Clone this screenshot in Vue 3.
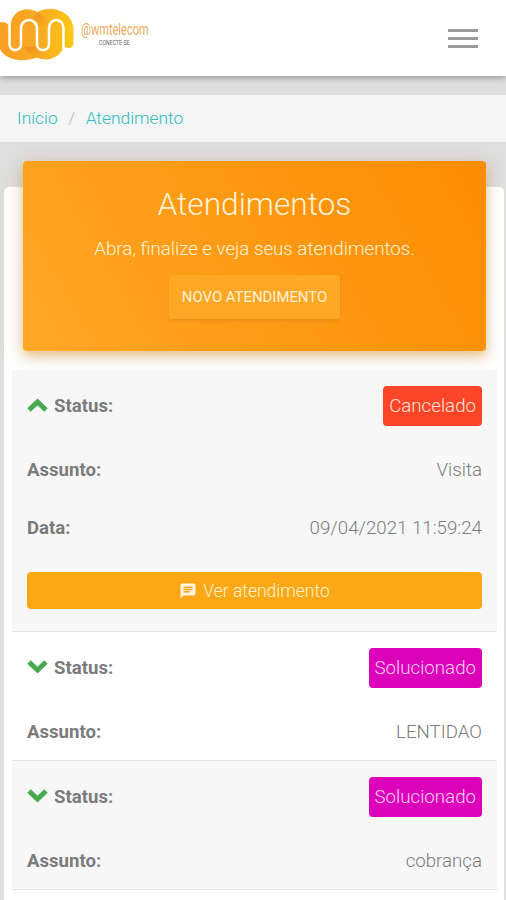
<template>
  <div class="page">
    <!-- Navbar -->
    <header class="navbar">
      <div class="brand">
        <svg class="logo" width="75" height="64" viewBox="0 0 75 64">
          <defs>
            <linearGradient id="ribbon" x1="0" y1="0" x2="1" y2="0">
              <stop offset="0" stop-color="#f99f24" />
              <stop offset="0.55" stop-color="#f9ab22" />
              <stop offset="1" stop-color="#fdc914" />
            </linearGradient>
            <linearGradient id="fold" x1="0" y1="0" x2="1" y2="1">
              <stop offset="0" stop-color="#f08c1e" stop-opacity="0.8" />
              <stop offset="1" stop-color="#f39220" stop-opacity="0" />
            </linearGradient>
          </defs>
          <path
            fill="url(#ribbon)"
            d="M0 22.5Q5 20.5 8.5 25L10.5 24C13 10 27 6 37 12C53 4 73.5 12 73.5 30V43.5Q73 48 68.5 48Q65 48 64 45.5C62 56 49 63 37 57.5C22 63 5 60 0 49Z"
          />
          <path fill="url(#fold)" d="M37 12q10 5 12 15l-9-1q-2-6-7-8Z" />
          <path fill="url(#fold)" d="M24 47q4 7 13 10.500l8-3q-6-3-8-8Z" />
          <path
            class="logo-line"
            d="M9.5 20v24c0 8 11.5 8 11.5 0V29c0-12 16-12 16 0v15c0 8 12 8 12 0V28.500c0-11.500 14.500-11.500 14.500 0V51"
          />
        </svg>
        <div class="brand-text">
          <span class="brand-name">@wmtelecom</span>
          <span class="brand-slogan">CONECTE-SE</span>
        </div>
      </div>
      <button class="menu-btn" aria-label="Menu" @click="menuOpen = !menuOpen">
        <span></span>
        <span></span>
        <span></span>
      </button>
    </header>

    <!-- Breadcrumb -->
    <nav class="breadcrumb">
      <a href="#">Início</a>
      <span class="separator">/</span>
      <a href="#">Atendimento</a>
    </nav>

    <main class="card">
      <div class="banner">
        <h1>Atendimentos</h1>
        <p>Abra, finalize e veja seus atendimentos.</p>
        <button class="new-btn">NOVO ATENDIMENTO</button>
      </div>

      <!-- Tickets -->
      <ul class="tickets">
        <li v-for="ticket in tickets" :key="ticket.id" class="ticket">
          <div class="line status-line" @click="toggle(ticket)">
            <span class="label">
              <svg
                class="chevron"
                :class="{ open: ticket.open }"
                width="21"
                height="14"
                viewBox="0 0 21 14"
              >
                <path d="M2 2l8.5 8 8.5-8" />
              </svg>
              Status:
            </span>
            <span class="badge" :class="ticket.status.toLowerCase()">{{ ticket.status }}</span>
          </div>
          <div class="line">
            <span class="label">Assunto:</span>
            <span>{{ ticket.subject }}</span>
          </div>
          <template v-if="ticket.open">
            <div class="line">
              <span class="label">Data:</span>
              <span>{{ ticket.date }}</span>
            </div>
            <button class="view-btn">
              <svg width="18" height="18" viewBox="0 0 24 24">
                <path
                  d="M20 2H4c-1.1 0-2 .9-2 2v18l4-4h14c1.1 0 2-.9 2-2V4c0-1.1-.9-2-2-2zM6 9h12v2H6V9zm8 5H6v-2h8v2zm4-6H6V6h12v2z"
                />
              </svg>
              Ver atendimento
            </button>
          </template>
        </li>
      </ul>
    </main>
  </div>
</template>

<script setup>
import { ref } from "vue";

const menuOpen = ref(false);

const tickets = ref([
  {
    id: 1,
    status: "Cancelado",
    subject: "Visita",
    date: "09/04/2021 11:59:24",
    open: true,
  },
  { id: 2, status: "Solucionado", subject: "LENTIDAO", date: "", open: false },
  { id: 3, status: "Solucionado", subject: "cobrança", date: "", open: false },
]);

const toggle = (ticket) => {
  ticket.open = !ticket.open;
};
</script>

<style>
body {
  margin: 0;
  background-color: #dedede;
}
</style>

<style scoped>
.page {
  display: flex;
  flex-direction: column;
  height: 900px;
  overflow: hidden;
  background-color: #dedede;
  font-family: Roboto, "Liberation Sans", sans-serif;
  font-size: 18.7px;
  font-weight: 300;
  color: #7b7b7b;
}

button {
  font-family: inherit;
  border: none;
  cursor: pointer;
}

/* Navbar Style */
.navbar {
  display: flex;
  flex-shrink: 0;
  justify-content: space-between;
  align-items: center;
  box-sizing: border-box;
  height: 76px;
  padding-right: 28px;
  background-color: #fff;
  box-shadow: 0 1px 7px rgba(0, 0, 0, 0.4);
}

.brand {
  display: flex;
  align-self: flex-start;
  gap: 6px;
}

.logo-line {
  fill: none;
  stroke: #fff;
  stroke-width: 2.5;
}

.brand-text {
  display: flex;
  flex-direction: column;
  width: 68px;
  padding-top: 21px;
  font-weight: 400;
}

.brand-name {
  color: #ecaa5c;
  font-size: 16px;
  line-height: 18px;
  transform: scaleX(0.69);
  transform-origin: left;
}

.brand-slogan {
  margin-left: 18px;
  color: #666;
  font-size: 8px;
  line-height: 8px;
  transform: scaleX(0.65);
  transform-origin: left;
}

.menu-btn {
  display: flex;
  flex-direction: column;
  gap: 5px;
  padding: 0;
  background: none;
}

.menu-btn span {
  width: 30px;
  height: 3px;
  background-color: #9b9b9b;
}

/* Breadcrumb Style */
.breadcrumb {
  display: flex;
  flex-shrink: 0;
  align-items: center;
  box-sizing: border-box;
  height: 47px;
  margin-top: 19px;
  padding: 0 0 1px 17px;
  font-size: 17.4px;
  background-color: #f5f5f5;
}

.breadcrumb a {
  color: #2ebcc0;
  text-decoration: none;
}

.separator {
  margin: 0 10.5px;
  color: #b5b5b5;
}

/* Card Style */
.card {
  flex: 1;
  margin: 45px 2px 0 4px;
  padding: 0 7px 0 8px;
  background-color: #fff;
  border-radius: 5px 5px 0 0;
}

.banner {
  display: flex;
  flex-direction: column;
  align-items: center;
  box-sizing: border-box;
  height: 190px;
  margin: -26px 11px 19px;
  padding-top: 25px;
  color: #fff3d6;
  background: linear-gradient(60deg, #ffa726, #fb8c00);
  border-radius: 4px;
  box-shadow: 0 5px 18px rgba(150, 115, 50, 0.3), 0 5px 8px rgba(255, 152, 0, 0.3);
}

.banner h1 {
  margin: 0;
  font-size: 31.7px;
  font-weight: 300;
  line-height: 38px;
}

.banner p {
  margin: 14px 0;
  line-height: 23px;
}

.new-btn {
  width: 171px;
  height: 44px;
  padding: 0;
  color: #fff3d6;
  font-size: 14.9px;
  font-weight: 400;
  background-color: #ffa726;
  border-radius: 3px;
  box-shadow: 0 2px 3px rgba(210, 125, 20, 0.4);
}

/* Ticket Style */
.tickets {
  margin: 0;
  padding: 0;
  list-style: none;
}

.ticket {
  padding: 0 15px;
  border-bottom: 1px solid #e3e3e3;
}

.ticket:nth-child(odd) {
  background-color: #f7f7f7;
}

.line {
  display: flex;
  justify-content: space-between;
  align-items: center;
  box-sizing: border-box;
  height: 58px;
  padding-top: 2px;
}

.status-line {
  height: 70px;
}

.label {
  display: flex;
  align-items: center;
  gap: 6px;
  font-size: 18.6px;
  font-weight: 700;
}

.chevron {
  margin-bottom: 2px;
}

.chevron path {
  fill: none;
  stroke: #48a950;
  stroke-width: 5;
}

.chevron.open {
  transform: rotate(180deg);
}

.badge {
  padding: 0 6px;
  color: #ffe4df;
  line-height: 40px;
  border-radius: 4px;
}

.cancelado {
  background-color: #ff4528;
}

.solucionado {
  color: #fbd5f5;
  background-color: #dc00bb;
}

.view-btn {
  display: flex;
  justify-content: center;
  align-items: center;
  gap: 6px;
  box-sizing: border-box;
  width: 100%;
  height: 37px;
  margin: 16px 0 22px;
  padding: 0;
  color: #fff3d6;
  font-size: 17.5px;
  font-weight: 300;
  background-color: #fca714;
  border-radius: 4px;
}

.view-btn svg {
  fill: #fff6e2;
}
</style>
